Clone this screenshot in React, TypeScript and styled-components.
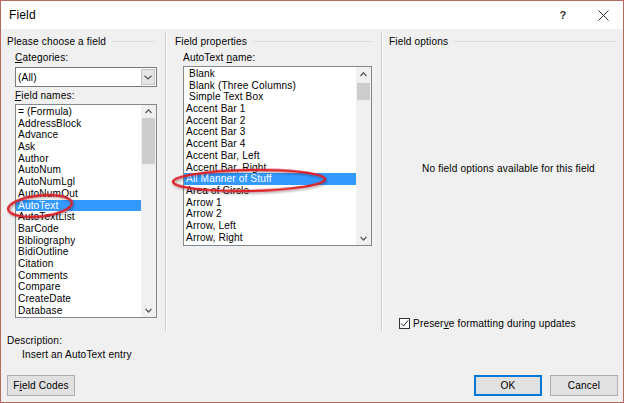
import React from 'react';
import styled, { createGlobalStyle } from 'styled-components';

const GlobalStyle = createGlobalStyle`
  html, body {
    margin: 0;
    padding: 0;
    background: #ffffff;
  }
  body {
    font-family: 'Liberation Sans', Arial, sans-serif;
    font-size: 10.1px;
    letter-spacing: 0.15px;
    color: #000;
  }
`;

const Window = styled.div`
  position: relative;
  width: 624px;
  height: 403px;
  box-sizing: border-box;
  border: 1px solid #b86a5c;
  background: #f0f0f0;
  display: flex;
  flex-direction: column;
  overflow: hidden;
`;

const TitleBar = styled.div`
  height: 28px;
  flex: none;
  background: #ffffff;
  display: flex;
  align-items: center;
  padding-left: 8px;
  font-size: 12px;
`;

const TitleText = styled.div`
  flex: 1;
`;

const TitleButton = styled.div`
  width: 40px;
  height: 28px;
  display: flex;
  align-items: center;
  justify-content: center;
  font-size: 11px;
  font-weight: 700;
  color: #333;
`;

const Columns = styled.div`
  height: 302px;
  flex: none;
  display: flex;
`;

const Column = styled.div<{ $width?: number; $padLeft: number; $padRight: number }>`
  ${(p) => (p.$width ? `width: ${p.$width}px; flex: none;` : 'flex: 1;')}
  box-sizing: border-box;
  padding: 5px ${(p) => p.$padRight}px 0 ${(p) => p.$padLeft}px;
  display: flex;
  flex-direction: column;
`;

const Divider = styled.div`
  width: 1px;
  flex: none;
  margin-top: 4px;
  background: #c9c9c9;
  border-right: 1px solid #ffffff;
`;

const GroupHeader = styled.div`
  height: 14px;
  display: flex;
  align-items: center;
  gap: 6px;
  white-space: nowrap;
  &::after {
    content: '';
    flex: 1;
    height: 1px;
    background: #dcdcdc;
  }
`;

const Inset = styled.div<{ $left: number }>`
  padding-left: ${(p) => p.$left}px;
  display: flex;
  flex-direction: column;
`;

const Label = styled.div<{ $top: number }>`
  height: 12px;
  line-height: 12px;
  margin-top: ${(p) => p.$top}px;
  white-space: nowrap;
`;

const Key = styled.span`
  text-decoration: underline;
  text-underline-offset: 1px;
`;

const Combo = styled.div`
  width: 142px;
  height: 20px;
  margin-top: 3px;
  box-sizing: border-box;
  border: 1px solid #7a7a7a;
  background: #ffffff;
  display: flex;
  align-items: stretch;
`;

const ComboValue = styled.div`
  flex: 1;
  padding-left: 2px;
  display: flex;
  align-items: center;
`;

const ComboButton = styled.div`
  width: 14px;
  margin: 1px;
  box-sizing: border-box;
  background: #e5e5e5;
  border: 1px solid #c4c4c4;
  display: flex;
  align-items: center;
  justify-content: center;
`;

const ListBox = styled.div<{ $width: number; $height: number }>`
  width: ${(p) => p.$width}px;
  height: ${(p) => p.$height}px;
  margin-top: 2px;
  box-sizing: border-box;
  border: 1px solid #828790;
  background: #ffffff;
  display: flex;
`;

const Items = styled.div`
  flex: 1;
  padding-top: 1px;
  overflow: hidden;
`;

const Item = styled.div<{ $selected?: boolean; $indent?: number }>`
  height: 11.7px;
  line-height: 11.7px;
  padding-left: ${(p) => 2 + (p.$indent || 0)}px;
  white-space: nowrap;
  background: ${(p) => (p.$selected ? '#3399ff' : 'transparent')};
  color: ${(p) => (p.$selected ? '#ffffff' : '#000000')};
`;

const ScrollBar = styled.div`
  width: 15px;
  flex: none;
  background: #f0f0f0;
  display: flex;
  flex-direction: column;
`;

const ScrollArrow = styled.div<{ $height: number }>`
  height: ${(p) => p.$height}px;
  flex: none;
  display: flex;
  align-items: center;
  justify-content: center;
`;

const Track = styled.div`
  flex: 1;
`;

const Thumb = styled.div<{ $top: number; $height: number }>`
  margin: ${(p) => p.$top}px 1px 0 1px;
  height: ${(p) => p.$height}px;
  background: #cdcdcd;
`;

const Message = styled.div`
  margin-top: 114px;
  padding-left: 12px;
  text-align: center;
  height: 14px;
  line-height: 14px;
  white-space: nowrap;
`;

const CheckRow = styled.div`
  margin-top: 140px;
  padding-left: 10px;
  display: flex;
  align-items: center;
  gap: 3px;
  height: 14px;
  white-space: nowrap;
`;

const CheckBox = styled.div`
  width: 11px;
  height: 11px;
  box-sizing: border-box;
  border: 1px solid #333333;
  background: #ffffff;
  display: flex;
  align-items: center;
  justify-content: center;
`;

const Bottom = styled.div`
  flex: 1;
  padding: 4px 5px 0 6px;
  display: flex;
  flex-direction: column;
`;

const DescText = styled.div`
  height: 12px;
  line-height: 12px;
  margin-top: 2px;
  padding-left: 15px;
`;

const ButtonRow = styled.div`
  margin-top: 14px;
  display: flex;
  gap: 8px;
`;

const Spacer = styled.div`
  flex: 1;
`;

const Button = styled.div<{ $default?: boolean }>`
  width: 68px;
  height: 21px;
  box-sizing: border-box;
  background: #e1e1e1;
  border: ${(p) => (p.$default ? '2px solid #0078d7' : '1px solid #adadad')};
  display: flex;
  align-items: center;
  justify-content: center;
`;

const Overlay = styled.svg`
  position: absolute;
  left: -1px;
  top: -1px;
  pointer-events: none;
`;

const Chevron = ({ up, w = 7, h = 4 }: { up?: boolean; w?: number; h?: number }) => (
  <svg width={w} height={h + 1} viewBox={`0 0 ${w} ${h + 1}`}>
    <polyline
      points={up ? `0.5,${h} ${w / 2},0.8 ${w - 0.5},${h}` : `0.5,0.8 ${w / 2},${h} ${w - 0.5},0.8`}
      fill="none"
      stroke="#555"
      strokeWidth="1.2"
    />
  </svg>
);

const fieldNames = [
  '= (Formula)', 'AddressBlock', 'Advance', 'Ask', 'Author', 'AutoNum', 'AutoNumLgl',
  'AutoNumOut', 'AutoText', 'AutoTextList', 'BarCode', 'Bibliography', 'BidiOutline',
  'Citation', 'Comments', 'Compare', 'CreateDate', 'Database',
];

const autoTextNames: [string, number][] = [
  ['Blank', 3], ['Blank (Three Columns)', 3], ['Simple Text Box', 3], ['Accent Bar 1', 0],
  ['Accent Bar 2', 0], ['Accent Bar 3', 0], ['Accent Bar 4', 0], ['Accent Bar, Left', 0],
  ['Accent Bar, Right', 0], ['All Manner of Stuff', 0], ['Area of Circle', 0], ['Arrow 1', 0],
  ['Arrow 2', 0], ['Arrow, Left', 0], ['Arrow, Right', 0],
];

type ScrollProps = { topArrow: number; thumbTop: number; thumbHeight: number };

function Scroll({ topArrow, thumbTop, thumbHeight }: ScrollProps) {
  return (
    <ScrollBar>
      <ScrollArrow $height={topArrow}><Chevron up /></ScrollArrow>
      <Track><Thumb $top={thumbTop} $height={thumbHeight} /></Track>
      <ScrollArrow $height={13}><Chevron /></ScrollArrow>
    </ScrollBar>
  );
}

export default function App() {
  return (
    <>
      <GlobalStyle />
      <Window>
        <TitleBar>
          <TitleText>Field</TitleText>
          <TitleButton>?</TitleButton>
          <TitleButton>
            <svg width="11" height="11" viewBox="0 0 11 11">
              <path d="M0.5 0.5 L10.5 10.5 M10.5 0.5 L0.5 10.5" stroke="#333" strokeWidth="1" />
            </svg>
          </TitleButton>
        </TitleBar>

        <Columns>
          <Column $width={164} $padLeft={6} $padRight={10}>
            <GroupHeader>Please choose a field</GroupHeader>
            <Inset $left={8}>
              <Label $top={4}><Key>C</Key>ategories:</Label>
              <Combo>
                <ComboValue>(All)</ComboValue>
                <ComboButton><Chevron w={8} h={4} /></ComboButton>
              </Combo>
              <Label $top={3}><Key>F</Key>ield names:</Label>
              <ListBox $width={142} $height={214}>
                <Items>
                  {fieldNames.map((n) => (
                    <Item key={n} $selected={n === 'AutoText'}>{n}</Item>
                  ))}
                </Items>
                <Scroll topArrow={13} thumbTop={0} thumbHeight={46} />
              </ListBox>
            </Inset>
          </Column>
          <Divider />
          <Column $width={214} $padLeft={8} $padRight={9}>
            <GroupHeader>Field properties</GroupHeader>
            <Inset $left={8}>
              <Label $top={4}>AutoText <Key>n</Key>ame:</Label>
              <ListBox $width={189} $height={180}>
                <Items>
                  {autoTextNames.map(([n, indent]) => (
                    <Item key={n} $indent={indent} $selected={n === 'All Manner of Stuff'}>{n}</Item>
                  ))}
                </Items>
                <Scroll topArrow={15} thumbTop={1} thumbHeight={17} />
              </ListBox>
            </Inset>
          </Column>
          <Divider />
          <Column $padLeft={6} $padRight={7}>
            <GroupHeader>Field options</GroupHeader>
            <Message>No field options available for this field</Message>
            <CheckRow>
              <CheckBox>
                <svg width="9" height="9" viewBox="0 0 9 9">
                  <polyline points="1,4.5 3.5,7 8,1.5" fill="none" stroke="#222" strokeWidth="1" />
                </svg>
              </CheckBox>
              <span>Preser<Key>v</Key>e formatting during updates</span>
            </CheckRow>
          </Column>
        </Columns>

        <Bottom>
          <Label $top={0}>Description:</Label>
          <DescText>Insert an AutoText entry</DescText>
          <ButtonRow>
            <Button>F<Key>i</Key>eld Codes</Button>
            <Spacer />
            <Button $default>OK</Button>
            <Button>Cancel</Button>
          </ButtonRow>
        </Bottom>

        <Overlay width="624" height="403" viewBox="0 0 624 403">
          <defs>
            <filter id="shade" x="-20%" y="-50%" width="140%" height="200%">
              <feDropShadow dx="1" dy="1.5" stdDeviation="1" floodColor="#000" floodOpacity="0.35" />
            </filter>
          </defs>
          <ellipse cx="40" cy="206" rx="32" ry="10.5" transform="rotate(-6 40 206)"
            fill="none" stroke="#d9232a" strokeWidth="2.4" filter="url(#shade)" />
          <ellipse cx="249" cy="180.5" rx="76" ry="10.5" transform="rotate(-1 249 180.5)"
            fill="none" stroke="#d9232a" strokeWidth="2.4" filter="url(#shade)" />
        </Overlay>
      </Window>
    </>
  );
}
